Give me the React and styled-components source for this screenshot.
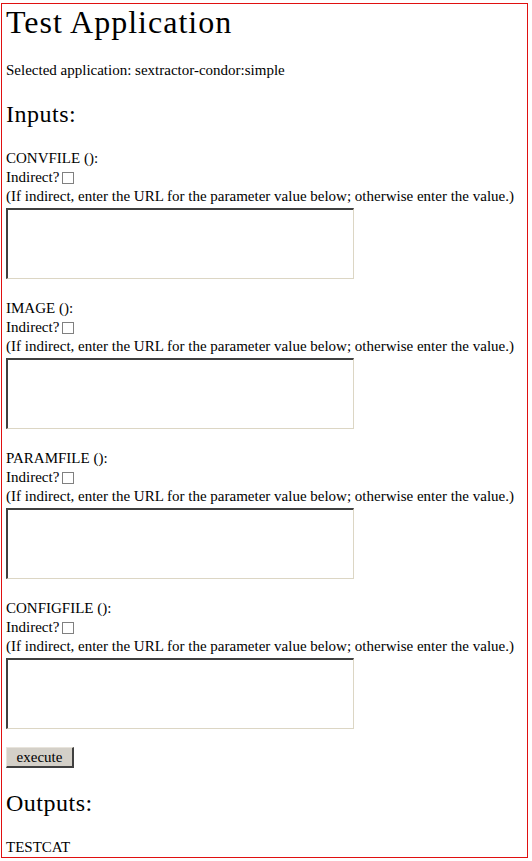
import React from "react";
import styled, { createGlobalStyle } from "styled-components";

const serif = `"Liberation Serif", "Times New Roman", serif`;

const GlobalStyle = createGlobalStyle`
  html, body { margin: 0; padding: 0; background: #fff; }
  body { font-family: ${serif}; color: #000; }
`;

const Page = styled.div`
  box-sizing: border-box;
  margin: 3px 0 0 1px;
  width: 527px;
  height: 855px;
  border: 1px solid #e01010;
  padding: 0 4px;
  display: flex;
  flex-direction: column;
  align-items: flex-start;
  font-family: ${serif};
`;

const Title = styled.h1`
  margin: 0;
  font-family: ${serif};
  font-weight: normal;
  font-size: 32px;
  line-height: 36px;
  letter-spacing: 1px;
`;

const Info = styled.p`
  margin: 21px 0 0;
  font-family: ${serif};
  font-size: 15px;
  line-height: 19px;
`;

const SectionHeading = styled.h2`
  margin: ${(p) => p.$top}px 0 0;
  font-family: ${serif};
  font-weight: normal;
  font-size: 24px;
  line-height: 26px;
  letter-spacing: 0.5px;
`;

const Param = styled.div`
  margin-top: ${(p) => p.$top}px;
  display: flex;
  flex-direction: column;
  align-items: flex-start;
  font-family: ${serif};
  font-size: 15px;
  line-height: 19px;
`;

const Line = styled.div`
  display: flex;
  align-items: center;
  height: 19px;
`;

const Check = styled.input.attrs({ type: "checkbox" })`
  appearance: none;
  box-sizing: border-box;
  width: 12px;
  height: 12px;
  margin: 0 0 0 3px;
  border: 1px solid #808080;
  background: #fff;
`;

const Area = styled.textarea`
  box-sizing: border-box;
  margin-top: 2px;
  width: 348px;
  height: 71px;
  border-top: 2px solid #404040;
  border-left: 2px solid #404040;
  border-right: 1px solid #dcd6c4;
  border-bottom: 1px solid #dcd6c4;
  resize: none;
  outline: none;
`;

const ExecButton = styled.button`
  box-sizing: border-box;
  margin-top: 18px;
  width: 68px;
  height: 22px;
  padding: 0;
  font-family: ${serif};
  font-size: 15px;
  color: #000;
  background: #d4d0c8;
  border-top: 1px solid #e8e4dc;
  border-left: 1px solid #e8e4dc;
  border-right: 2px solid #404040;
  border-bottom: 2px solid #404040;
`;

const OutputName = styled.div`
  margin-top: 22px;
  font-family: ${serif};
  font-size: 15px;
  line-height: 19px;
`;

const params = ["CONVFILE", "IMAGE", "PARAMFILE", "CONFIGFILE"];

export default function App() {
  return (
    <>
      <GlobalStyle />
      <Page>
        <Title>Test Application</Title>
        <Info>Selected application: sextractor-condor:simple</Info>
        <SectionHeading $top={21}>Inputs:</SectionHeading>
        {params.map((name, i) => (
          <Param key={name} $top={i === 0 ? 22 : 20}>
            <Line>{name} ():</Line>
            <Line>
              Indirect? <Check />
            </Line>
            <Line>
              (If indirect, enter the URL for the parameter value below; otherwise enter the value.)
            </Line>
            <Area />
          </Param>
        ))}
        <ExecButton>execute</ExecButton>
        <SectionHeading $top={22}>Outputs:</SectionHeading>
        <OutputName>TESTCAT</OutputName>
      </Page>
    </>
  );
}
